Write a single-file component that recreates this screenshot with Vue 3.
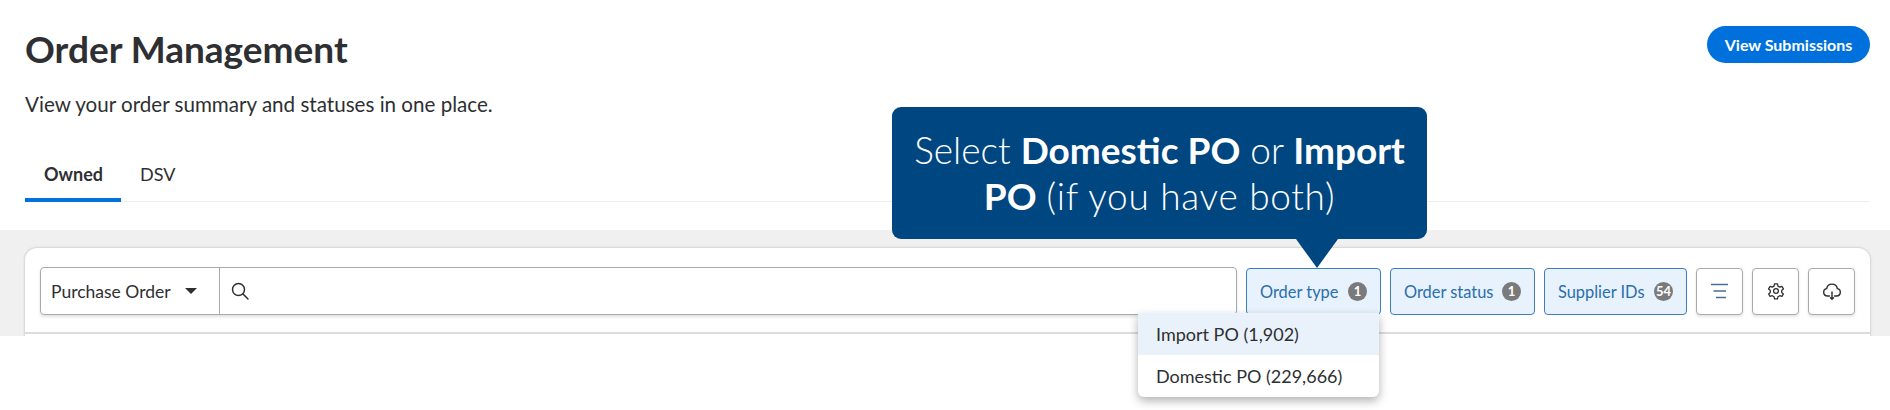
<script setup>
const filters = [
  { label: 'Order type', count: '1', width: '135px' },
  { label: 'Order status', count: '1', width: '145px' },
  { label: 'Supplier IDs', count: '54', width: '143px' },
]
const options = ['Import PO (1,902)', 'Domestic PO (229,666)']
</script>

<template>
  <div class="page">
    <header class="head">
      <div>
        <h1 class="title">Order Management</h1>
        <p class="sub">View your order summary and statuses in one place.</p>
      </div>
      <button class="primary">View Submissions</button>
    </header>

    <nav class="tabs">
      <span class="tab active">Owned</span>
      <span class="tab">DSV</span>
    </nav>

    <section class="band">
      <div class="card">
        <div class="toolbar">
          <div class="search">
            <div class="select">
              <span>Purchase Order</span>
              <i class="caret"></i>
            </div>
            <div class="field">
              <svg width="20" height="20" viewBox="0 0 20 20" fill="none" stroke="#2e2f32" stroke-width="1.5">
                <circle cx="8.5" cy="8.5" r="6" />
                <path d="M13 13l5 5" stroke-linecap="round" />
              </svg>
            </div>
          </div>
          <button v-for="f in filters" :key="f.label" class="filter" :style="{ width: f.width }">
            <span>{{ f.label }}</span>
            <b class="count">{{ f.count }}</b>
          </button>
          <button class="icon">
            <svg width="18" height="16" viewBox="0 0 18 16" fill="none" stroke="#4a6f96" stroke-width="1.6">
              <path d="M0 1.5h17M2.5 8h12.5M5 14.5h10" />
            </svg>
          </button>
          <button class="icon">
            <svg width="18" height="18" viewBox="0 0 24 24" fill="none" stroke="#2e2f32" stroke-width="1.7" stroke-linejoin="round">
              <circle cx="12" cy="12" r="3.2" />
              <path d="M10 2.5h4l.6 3 2.4 1.3 2.9-1 2 3.4-2.3 2 0 2.7 2.3 2-2 3.4-2.9-1-2.4 1.3-.6 3h-4l-.6-3-2.4-1.3-2.9 1-2-3.4 2.3-2 0-2.7-2.3-2 2-3.4 2.9 1 2.4-1.3z" />
            </svg>
          </button>
          <button class="icon">
            <svg width="20" height="20" viewBox="0 0 24 24" fill="none" stroke="#2e2f32" stroke-width="1.7" stroke-linejoin="round" stroke-linecap="round">
              <path d="M9 18H6.5a4.5 4.5 0 0 1-.9-8.9 6.5 6.5 0 0 1 12.8 0 4.5 4.5 0 0 1-.9 8.9H15" />
              <path d="M12 13v9M10.2 20.2l1.8 1.8 1.8-1.8" />
            </svg>
          </button>
        </div>
        <div class="rule"></div>
      </div>
    </section>

    <div class="tip">
      Select <b>Domestic PO</b> or <b>Import PO</b> <span class="aside">(if you have both)</span>
    </div>

    <ul class="menu">
      <li v-for="(o, i) in options" :key="o" :class="{ on: i === 0 }">{{ o }}</li>
    </ul>
  </div>
</template>

<style>
html, body { margin: 0; background: #fff; }
</style>

<style scoped>
.page {
  position: relative;
  width: 1890px;
  height: 410px;
  overflow: hidden;
  background: #fff;
  font-family: Lato, "Noto Sans", sans-serif;
  color: #2e2f32;
}
.head {
  display: flex;
  justify-content: space-between;
  align-items: flex-start;
  padding: 26px 20px 0 25px;
  height: 125px;
  box-sizing: border-box;
}
.title {
  margin: 0;
  font-size: 37px;
  line-height: 46px;
  font-weight: 700;
}
.sub {
  margin: 19px 0 0;
  font-size: 20.6px;
  line-height: 26px;
  font-weight: 400;
}
.primary {
  width: 163px;
  height: 37px;
  border: 0;
  border-radius: 19px;
  background: #0071dc;
  color: #fff;
  font: 700 16px Lato, sans-serif;
}
.tabs {
  display: flex;
  height: 77px;
  margin: 0 20px 28px 25px;
  box-sizing: border-box;
  border-bottom: 1px solid #eeeeef;
}
.tab {
  box-sizing: border-box;
  height: 77px;
  padding: 37px 0 0;
  font-size: 18px;
  line-height: 24px;
  margin-left: 19px;
}
.tab.active {
  width: 96px;
  margin: 0;
  padding-left: 19px;
  font-weight: 700;
  border-bottom: 4px solid #0071dc;
}
.band {
  height: 106px;
  background: #f0f0f0;
  padding: 18px 20px 0 25px;
  box-sizing: border-box;
  overflow: hidden;
}
.card {
  height: 120px;
  background: #fff;
  border-radius: 12px 12px 0 0;
  box-shadow: 0 0 2px 1px #d4d4d6;
}
.toolbar {
  display: flex;
  align-items: center;
  gap: 9px;
  height: 84px;
  padding: 2px 15px 0;
  box-sizing: border-box;
}
.search {
  display: flex;
  width: 1197px;
  height: 48px;
  box-sizing: border-box;
  border: 1px solid #a9aaad;
  border-radius: 4px;
  box-shadow: 0 2px 3px rgba(0, 0, 0, .12);
}
.select {
  display: flex;
  align-items: center;
  justify-content: space-between;
  width: 179px;
  padding: 0 22px 0 10px;
  box-sizing: border-box;
  border-right: 1px solid #a9aaad;
  font-size: 17.5px;
}
.caret {
  width: 0;
  height: 0;
  border: 6px solid transparent;
  border-top: 6px solid #2e2f32;
  border-bottom: 0;
}
.field {
  display: flex;
  align-items: center;
  padding-left: 10px;
}
.filter {
  display: flex;
  align-items: center;
  justify-content: space-between;
  height: 47px;
  padding: 0 13px;
  box-sizing: border-box;
  background: #e8f2fc;
  border: 1px solid #3a7fc2;
  border-radius: 4px;
  color: #2a6ead;
  font: 400 16.4px Lato, sans-serif;
}
.count {
  display: flex;
  align-items: center;
  justify-content: center;
  width: 19px;
  height: 19px;
  border-radius: 50%;
  background: #7a7a7c;
  color: #fff;
  font-size: 13px;
}
.icon {
  display: flex;
  align-items: center;
  justify-content: center;
  width: 47px;
  height: 47px;
  padding: 0;
  background: #fff;
  border: 1px solid #a9aaad;
  border-radius: 4px;
  box-shadow: 0 2px 3px rgba(0, 0, 0, .1);
}
.rule {
  border-top: 2px solid #dcdcde;
}
.tip {
  position: absolute;
  left: 892px;
  top: 107px;
  width: 535px;
  height: 132px;
  box-sizing: border-box;
  padding: 20px 15px 0;
  background: #004680;
  border-radius: 9px;
  color: #fff;
  font-size: 37px;
  line-height: 46px;
  font-weight: 300;
  text-align: center;
}
.tip b { font-weight: 700; }
.aside { letter-spacing: 0.7px; }
.tip::after {
  content: "";
  position: absolute;
  left: 404px;
  top: 132px;
  border-left: 21px solid transparent;
  border-right: 21px solid transparent;
  border-top: 29px solid #004680;
}
.menu {
  position: absolute;
  left: 1138px;
  top: 313px;
  width: 241px;
  height: 84px;
  margin: 0;
  padding: 0;
  list-style: none;
  background: #fff;
  border-radius: 0 0 6px 6px;
  box-shadow: 0 4px 10px rgba(0, 0, 0, .3);
  font-size: 18px;
  overflow: hidden;
}
.menu li {
  height: 42px;
  line-height: 42px;
  padding-left: 18px;
}
.menu li.on { background: #e9f2fb; }
</style>
